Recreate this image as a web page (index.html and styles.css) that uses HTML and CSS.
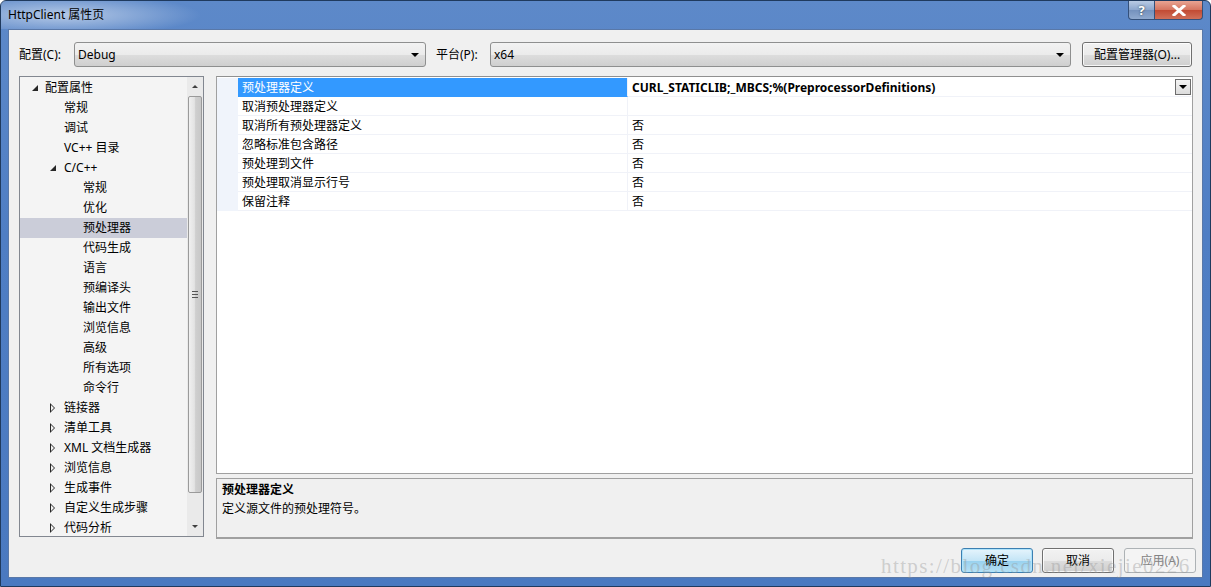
FILE: index.html
```html
<!DOCTYPE html>
<html lang="zh-CN">
<head>
    <meta charset="UTF-8">
    <meta name="viewport" content="width=device-width, initial-scale=1.0">
    <title>HttpClient 属性页</title>
    <link rel="stylesheet" href="styles.css">
</head>
<body>
    <div id="window">
        <div id="titleBar">
            <span class="titleText">HttpClient 属性页</span>
            <div class="captionBtns">
                <div class="capBtn helpBtn">?</div>
                <div class="capBtn closeBtn">
                    <svg width="14" height="11" viewBox="0 0 14 11"><path d="M2 1 L12 10 M12 1 L2 10" stroke="#fff" stroke-width="3" stroke-linecap="square"/></svg>
                </div>
            </div>
        </div>

        <div id="client">
            <div class="configRow">
                <span class="label cfgLabel">配置(C):</span>
                <div class="combo cfgCombo"><span>Debug</span><i class="comboArrow"></i></div>
                <span class="label platLabel">平台(P):</span>
                <div class="combo platCombo"><span>x64</span><i class="comboArrow"></i></div>
                <div class="btn mgrBtn">配置管理器(O)...</div>
            </div>

            <div class="main">
                <div class="tree">
                    <div class="treeList">
                        <div class="node lv0"><i class="tri open"></i>配置属性</div>
                        <div class="node lv1">常规</div>
                        <div class="node lv1">调试</div>
                        <div class="node lv1">VC++ 目录</div>
                        <div class="node lv1"><i class="tri open"></i>C/C++</div>
                        <div class="node lv2">常规</div>
                        <div class="node lv2">优化</div>
                        <div class="node lv2 selected">预处理器</div>
                        <div class="node lv2">代码生成</div>
                        <div class="node lv2">语言</div>
                        <div class="node lv2">预编译头</div>
                        <div class="node lv2">输出文件</div>
                        <div class="node lv2">浏览信息</div>
                        <div class="node lv2">高级</div>
                        <div class="node lv2">所有选项</div>
                        <div class="node lv2">命令行</div>
                        <div class="node lv1"><i class="tri closed"></i>链接器</div>
                        <div class="node lv1"><i class="tri closed"></i>清单工具</div>
                        <div class="node lv1"><i class="tri closed"></i>XML 文档生成器</div>
                        <div class="node lv1"><i class="tri closed"></i>浏览信息</div>
                        <div class="node lv1"><i class="tri closed"></i>生成事件</div>
                        <div class="node lv1"><i class="tri closed"></i>自定义生成步骤</div>
                        <div class="node lv1"><i class="tri closed"></i>代码分析</div>
                    </div>
                    <div class="vScroll">
                        <div class="sbArrow up"><i></i></div>
                        <div class="sbTrack">
                            <div class="sbThumb"><span class="grip"></span></div>
                        </div>
                        <div class="sbArrow down"><i></i></div>
                    </div>
                </div>

                <div class="rightPane">
                    <div class="grid">
                        <div class="row selected">
                            <div class="gutter"></div>
                            <div class="name">预处理器定义</div>
                            <div class="value bold">CURL_STATICLIB;_MBCS;%(PreprocessorDefinitions)<span class="dropBtn"><i></i></span></div>
                        </div>
                        <div class="row">
                            <div class="gutter"></div>
                            <div class="name">取消预处理器定义</div>
                            <div class="value"></div>
                        </div>
                        <div class="row">
                            <div class="gutter"></div>
                            <div class="name">取消所有预处理器定义</div>
                            <div class="value">否</div>
                        </div>
                        <div class="row">
                            <div class="gutter"></div>
                            <div class="name">忽略标准包含路径</div>
                            <div class="value">否</div>
                        </div>
                        <div class="row">
                            <div class="gutter"></div>
                            <div class="name">预处理到文件</div>
                            <div class="value">否</div>
                        </div>
                        <div class="row">
                            <div class="gutter"></div>
                            <div class="name">预处理取消显示行号</div>
                            <div class="value">否</div>
                        </div>
                        <div class="row">
                            <div class="gutter"></div>
                            <div class="name">保留注释</div>
                            <div class="value">否</div>
                        </div>
                    </div>
                    <div class="desc">
                        <div class="descTitle">预处理器定义</div>
                        <div class="descText">定义源文件的预处理符号。</div>
                    </div>
                </div>
            </div>

            <div class="buttonRow">
                <div class="btn defaultBtn">确定</div>
                <div class="btn">取消</div>
                <div class="btn disabledBtn">应用(A)</div>
            </div>
        </div>

        <div class="watermark">https://blog.csdn.net/xiejie0226</div>
    </div>
</body>
</html>
```

FILE: styles.css
```css
html, body{
    margin: 0;
    padding: 0;
}
body{
    width: 1211px;
    height: 587px;
    overflow: hidden;
    font-family: "Noto Sans", "Noto Sans CJK SC", sans-serif;
    font-size: 12px;
    color: #000;
}
#window{
    position: relative;
    width: 1211px;
    height: 587px;
    box-sizing: border-box;
    border: 1px solid #1f3a5e;
    border-radius: 6px 6px 0 0;
    background: linear-gradient(#5d89c9, #4f7ec4 40%, #4a79c0);
    display: flex;
    flex-direction: column;
}
#titleBar{
    height: 28px;
    display: flex;
    align-items: flex-start;
    justify-content: space-between;
    background: radial-gradient(ellipse 200px 30px at 60px 14px, rgba(255,255,255,0.55), rgba(255,255,255,0) 70%);
}
.titleText{
    margin: 6px 0 0 7px;
    line-height: 16px;
    font-size: 12px;
    color: #000;
}
.captionBtns{
    display: flex;
    margin-right: 7px;
}
.capBtn{
    height: 19px;
    box-sizing: border-box;
    border: 1px solid #34507a;
    border-top: none;
    display: flex;
    align-items: center;
    justify-content: center;
    color: #fff;
    font-weight: bold;
    font-size: 13px;
}
.helpBtn{
    width: 27px;
    border-radius: 0 0 0 4px;
    background: linear-gradient(#b9cbe4, #8ba6cd 50%, #7491bd 51%, #8fa9cf);
    text-shadow: 0 0 2px #233;
}
.closeBtn{
    width: 48px;
    border-left: none;
    border-radius: 0 0 4px 0;
    background: linear-gradient(#e8a493, #d4745f 50%, #c24a33 51%, #d0705a);
}

#client{
    flex: 1;
    margin: 0 7px 8px 7px;
    background: #f0f0f0;
    border: 1px solid #5978a8;
    display: flex;
    flex-direction: column;
}

/* top configuration row */
.configRow{
    display: flex;
    align-items: center;
    height: 25px;
    margin: 12px 0 0 10px;
}
.label{
    line-height: 16px;
}
.cfgLabel{
    width: 55px;
}
.platLabel{
    width: 54px;
    margin-left: 10px;
}
.combo{
    height: 25px;
    box-sizing: border-box;
    border: 1px solid #8e8f8f;
    border-radius: 3px;
    background: linear-gradient(#f2f2f2, #ebebeb 50%, #dddddd 51%, #cfcfcf);
    display: flex;
    align-items: center;
    justify-content: space-between;
    padding: 0 6px 0 3px;
}
.combo span{
    line-height: 16px;
}
.cfgCombo{
    width: 352px;
}
.platCombo{
    width: 581px;
}
.comboArrow{
    width: 0;
    height: 0;
    border-left: 4px solid transparent;
    border-right: 4px solid transparent;
    border-top: 4px solid #000;
}
.btn{
    height: 25px;
    box-sizing: border-box;
    border: 1px solid #707070;
    border-radius: 3px;
    background: linear-gradient(#f2f2f2, #ebebeb 50%, #dddddd 51%, #cfcfcf);
    display: flex;
    align-items: center;
    justify-content: center;
    line-height: 16px;
    box-shadow: inset 0 0 0 1px rgba(255,255,255,0.8);
}
.mgrBtn{
    width: 110px;
    margin-left: 11px;
}

/* tree and grid */
.main{
    display: flex;
    margin: 9px 0 0 10px;
    height: 463px;
}
.tree{
    width: 185px;
    height: 461px;
    box-sizing: border-box;
    border: 1px solid #828790;
    background: #f4f4f4;
    display: flex;
}
.treeList{
    flex: 1;
    padding-top: 1px;
    overflow: hidden;
}
.node{
    position: relative;
    height: 20px;
    line-height: 20px;
    white-space: nowrap;
}
.node.lv0{ padding-left: 25px; }
.node.lv1{ padding-left: 44px; }
.node.lv2{ padding-left: 63px; }
.node.selected{
    background: #cbcdd9;
}
.tri{
    position: absolute;
    top: 7px;
}
.lv0 .tri{ left: 12px; }
.lv1 .tri{ left: 30px; }
.tri.open{
    width: 0;
    height: 0;
    border-left: 6px solid transparent;
    border-bottom: 6px solid #262626;
}
.tri.closed{
    top: 5px;
    width: 0;
    height: 0;
    border-top: 5px solid transparent;
    border-bottom: 5px solid transparent;
    border-left: 5px solid #262626;
}
.tri.closed::after{
    content: "";
    position: absolute;
    left: -4px;
    top: -3px;
    border-top: 3px solid transparent;
    border-bottom: 3px solid transparent;
    border-left: 3px solid #f4f4f4;
}
.vScroll{
    width: 16px;
    display: flex;
    flex-direction: column;
    background: #eaeaea;
}
.sbArrow{
    height: 19px;
    display: flex;
    align-items: center;
    justify-content: center;
}
.sbArrow i{
    width: 0;
    height: 0;
    border-left: 3px solid transparent;
    border-right: 3px solid transparent;
}
.sbArrow.up i{ border-bottom: 3px solid #404040; }
.sbArrow.down i{ border-top: 3px solid #404040; }
.sbTrack{
    flex: 1;
    padding: 0 0 24px 0;
    display: flex;
}
.sbThumb{
    flex: 1;
    margin: 0 1px;
    border: 1px solid #9a9a9a;
    border-radius: 2px;
    background: linear-gradient(to right, #f0f0f0, #e3e3e3 45%, #cfcfcf 55%, #c8c8c8);
    display: flex;
    align-items: center;
    justify-content: center;
}
.grip{
    width: 6px;
    height: 5px;
    border-top: 1px solid #555;
    border-bottom: 1px solid #555;
    background: linear-gradient(transparent 2px, #555 2px, #555 3px, transparent 3px);
}

.rightPane{
    margin-left: 12px;
    width: 977px;
    display: flex;
    flex-direction: column;
}
.grid{
    height: 398px;
    box-sizing: border-box;
    border: 1px solid #a0a0a0;
    border-top-color: #909090;
    background: #fff;
    padding-top: 1px;
}
.row{
    display: flex;
    height: 19px;
    line-height: 20px;
}
.gutter{
    width: 21px;
    background: #f0f4fb;
}
.name{
    width: 385px;
    padding-left: 4px;
    border-bottom: 1px solid #f0f2f8;
    border-right: 1px solid #f0f2f8;
    white-space: nowrap;
    overflow: hidden;
}
.row.selected .name{
    background: #3399ff;
    color: #fff;
    border-bottom-color: #3399ff;
}
.value{
    flex: 1;
    position: relative;
    padding-left: 4px;
    border-bottom: 1px solid #f0f2f8;
    white-space: nowrap;
}
.value.bold{
    font-weight: bold;
}
.dropBtn{
    position: absolute;
    right: 1px;
    top: 1px;
    width: 16px;
    height: 16px;
    box-sizing: border-box;
    border: 1px solid #6d6d6d;
    background: linear-gradient(#f4f4f4, #dcdcdc);
    display: flex;
    align-items: center;
    justify-content: center;
}
.dropBtn i{
    width: 0;
    height: 0;
    border-left: 4px solid transparent;
    border-right: 4px solid transparent;
    border-top: 4px solid #000;
}
.desc{
    margin-top: 4px;
    height: 61px;
    box-sizing: border-box;
    border: 1px solid #a0a0a0;
    border-bottom: 2px solid #a0a0a0;
    background: #f0f0f0;
    padding: 1px 5px;
}
.descTitle{
    font-weight: bold;
    line-height: 19px;
}
.descText{
    line-height: 19px;
}

/* bottom buttons */
.buttonRow{
    display: flex;
    justify-content: flex-end;
    margin: 9px 6px 0 0;
    gap: 9px;
}
.buttonRow .btn{
    width: 72px;
}
.defaultBtn{
    border-color: #3c7fb1;
    background: linear-gradient(#e5f4fc, #c4e5f6 50%, #98d1ef 51%, #b6e0f4);
    box-shadow: inset 0 0 0 1px #aee3fb;
}
.disabledBtn{
    margin-left: 1px;
    border-color: #adb2b5;
    background: #f4f4f4;
    color: #838383;
    box-shadow: none;
}

.watermark{
    position: absolute;
    left: 880px;
    top: 553px;
    font-family: "Liberation Serif", serif;
    font-size: 21px;
    letter-spacing: 1.4px;
    color: rgba(150,150,150,0.4);
    white-space: nowrap;
    pointer-events: none;
}
```
